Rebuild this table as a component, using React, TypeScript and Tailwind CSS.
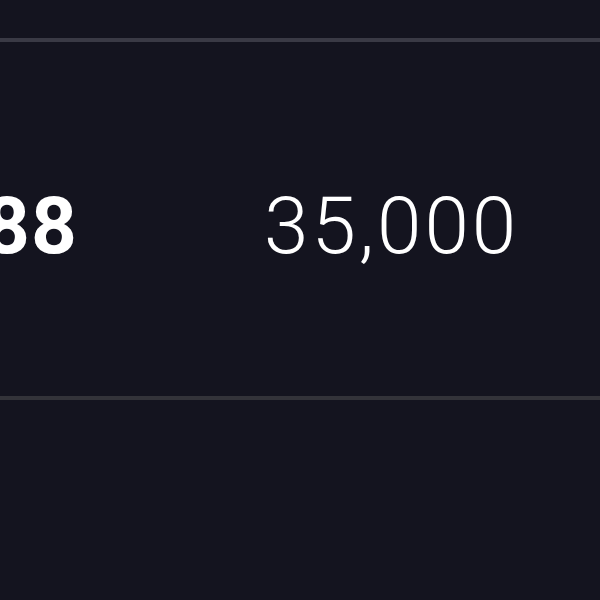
export default function App() {
  return (
    <div className="w-[600px] h-[600px] overflow-hidden bg-[#14141f] font-['Roboto',sans-serif] text-white">
      <div className="h-[38px]" />
      <div className="h-[4px] bg-[#3a3a45]" />
      {/* Table row */}
      <div className="flex items-center h-[354px] pt-[14px]">
        <div className="-ml-[16px] w-[280px] shrink-0 text-[80px] font-bold leading-none tracking-[1px]">
          88
        </div>
        <div className="text-[80px] font-light leading-none tracking-[3px]">35,000</div>
      </div>
      <div className="h-[4px] bg-[#333339]" />
    </div>
  );
}
